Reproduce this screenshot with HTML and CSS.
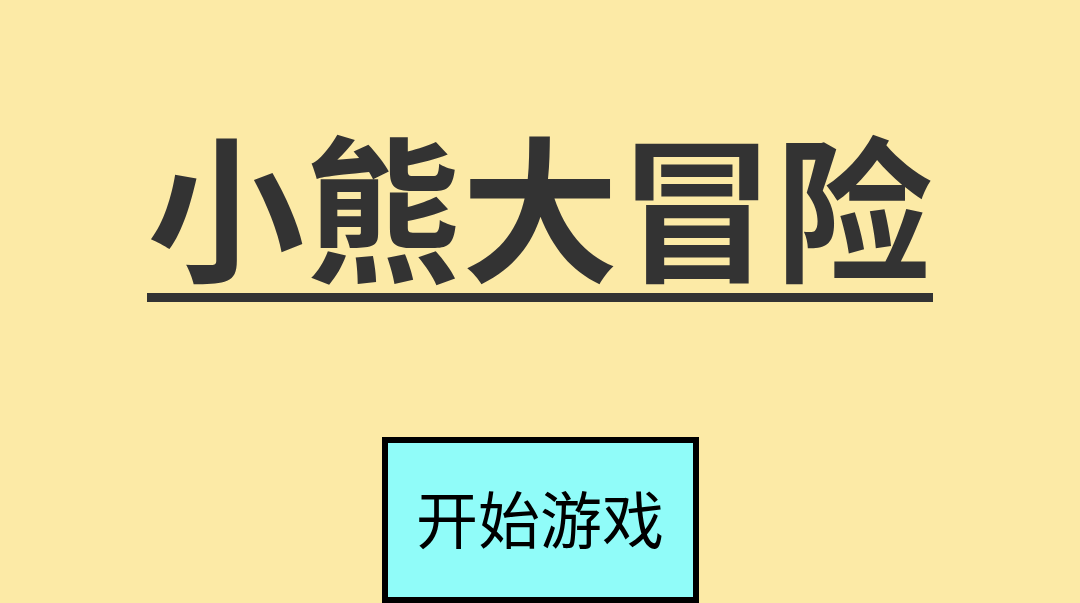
FILE: index.html
```html
<!DOCTYPE html>
<html lang="zh">
<head>
<meta charset="utf-8">
<title>小熊大冒险</title>
<link rel="stylesheet" href="styles.css">
</head>
<body>
<main class="screen">
  <h1 class="title"><span class="title-text">小熊大冒险</span></h1>
  <button class="start-btn" type="button">开始游戏</button>
</main>
</body>
</html>
```
FILE: styles.css
```css
html, body {
  margin: 0;
  padding: 0;
  height: 100%;
}
body {
  background: #fceaa6;
  overflow: hidden;
  font-family: "Noto Sans CJK SC", "Noto Sans", sans-serif;
}
.screen {
  display: flex;
  flex-direction: column;
  align-items: center;
  height: 603px;
}
.title {
  margin: 117px 0 0 0;
  font-size: 157px;
  font-weight: 700;
  line-height: 1;
  color: #333333;
}
.title-text {
  display: inline-block;
  line-height: 170px;
  padding-bottom: 6px;
  border-bottom: 9px solid #333333;
}
.start-btn {
  margin-top: 135px;
  box-sizing: border-box;
  width: 317px;
  height: 166px;
  border: 6px solid #000000;
  background: #90fcf9;
  color: #000000;
  font-family: "Noto Sans CJK SC", "Noto Sans", sans-serif;
  font-size: 62px;
  font-weight: 400;
  padding: 0 0 6px 0;
  cursor: pointer;
}
```
